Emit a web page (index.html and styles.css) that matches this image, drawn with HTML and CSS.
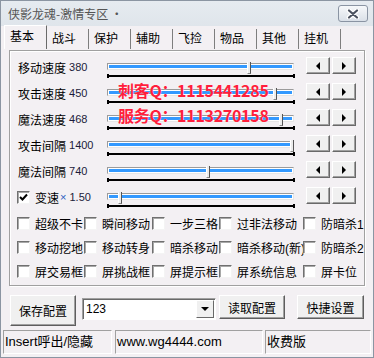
FILE: index.html
```html
<!DOCTYPE html>
<html lang="zh">
<head>
<meta charset="UTF-8">
<title>侠影龙魂-激情专区</title>
<link rel="stylesheet" href="styles.css">
</head>
<body>
<div class="win">
  <div class="titlebar">
    <span class="title">侠影龙魂-激情专区 ·</span>
    <span class="close-btn">
      <svg width="14" height="10" viewBox="0 0 14 10">
        <path d="M3 1.5 L11 8.5 M11 1.5 L3 8.5" stroke="#fff" stroke-width="4.5" stroke-linecap="round"/>
        <path d="M3 1.5 L11 8.5 M11 1.5 L3 8.5" stroke="#4b5260" stroke-width="2.2" stroke-linecap="round"/>
      </svg>
    </span>
  </div>

  <div class="tabs">
    <span class="tab active">基本</span>
    <span class="tab">战斗</span>
    <span class="tab">保护</span>
    <span class="tab">辅助</span>
    <span class="tab">飞捡</span>
    <span class="tab">物品</span>
    <span class="tab">其他</span>
    <span class="tab">挂机</span>
  </div>

  <div class="group">
    <div class="row">
      <div class="lbl">移动速度<span class="num">380</span></div>
      <div class="slider"><div class="track"></div><div class="ticks"></div><div class="thumb" style="left:140px"></div></div>
      <div class="spin"><button class="arr"><i class="tri-l"></i></button><button class="arr"><i class="tri-r"></i></button></div>
    </div>
    <div class="row">
      <div class="lbl">攻击速度<span class="num">450</span></div>
      <div class="slider"><div class="track"></div><div class="ticks"></div><div class="thumb" style="left:166px"></div></div>
      <div class="spin"><button class="arr"><i class="tri-l"></i></button><button class="arr"><i class="tri-r"></i></button></div>
    </div>
    <div class="row">
      <div class="lbl">魔法速度<span class="num">468</span></div>
      <div class="slider"><div class="track"></div><div class="ticks"></div><div class="thumb" style="left:172px"></div></div>
      <div class="spin"><button class="arr"><i class="tri-l"></i></button><button class="arr"><i class="tri-r"></i></button></div>
    </div>
    <div class="row">
      <div class="lbl">攻击间隔<span class="num">1400</span></div>
      <div class="slider"><div class="track"></div><div class="ticks"></div><div class="thumb" style="left:183px"></div></div>
      <div class="spin"><button class="arr"><i class="tri-l"></i></button><button class="arr"><i class="tri-r"></i></button></div>
    </div>
    <div class="row">
      <div class="lbl">魔法间隔<span class="num">740</span></div>
      <div class="slider"><div class="track"></div><div class="ticks"></div><div class="thumb" style="left:99px"></div></div>
      <div class="spin"><button class="arr"><i class="tri-l"></i></button><button class="arr"><i class="tri-r"></i></button></div>
    </div>
    <div class="row">
      <div class="lbl chk-lbl"><span class="cb checked"><svg width="11" height="11" viewBox="0 0 11 11"><path d="M2 5 L4.5 7.5 L9 2.5" fill="none" stroke="#000" stroke-width="2"/></svg></span><span class="cb-text">变速</span><span class="mul">×</span><span class="num">1.50</span></div>
      <div class="slider"><div class="track"></div><div class="ticks"></div><div class="thumb" style="left:11px"></div></div>
      <div class="spin"><button class="arr"><i class="tri-l"></i></button><button class="arr"><i class="tri-r"></i></button></div>
    </div>

    <div class="qq qq1">刺客Q：1115441285</div>
    <div class="qq qq2">服务Q：1113270158</div>

    <div class="opts">
      <label class="opt"><span class="cb"></span>超级不卡</label>
      <label class="opt"><span class="cb"></span>瞬间移动</label>
      <label class="opt"><span class="cb"></span>一步三格</label>
      <label class="opt"><span class="cb"></span>过非法移动</label>
      <label class="opt"><span class="cb"></span>防暗杀1</label>

      <label class="opt"><span class="cb"></span>移动挖地</label>
      <label class="opt"><span class="cb"></span>移动转身</label>
      <label class="opt"><span class="cb"></span>暗杀移动</label>
      <label class="opt"><span class="cb"></span>暗杀移动(新)</label>
      <label class="opt"><span class="cb"></span>防暗杀2</label>

      <label class="opt"><span class="cb"></span>屏交易框</label>
      <label class="opt"><span class="cb"></span>屏挑战框</label>
      <label class="opt"><span class="cb"></span>屏提示框</label>
      <label class="opt"><span class="cb"></span>屏系统信息</label>
      <label class="opt"><span class="cb"></span>屏卡位</label>
    </div>
  </div>

  <div class="actions">
    <button class="btn btn-save">保存配置</button>
    <div class="combo">
      <span class="combo-val">123</span>
      <span class="combo-drop"><i class="tri-d"></i></span>
    </div>
    <button class="btn btn-load">读取配置</button>
    <button class="btn btn-quick">快捷设置</button>
  </div>

  <div class="status">
    <div class="sp sp1">Insert呼出/隐藏</div>
    <div class="sp sp2">www.wg4444.com</div>
    <div class="sp sp3">收费版</div>
  </div>
</div>
</body>
</html>
```

FILE: styles.css
```css
body {
  margin: 0;
  background: #fff;
  font-family: "Liberation Sans", "Noto Sans CJK SC", sans-serif;
  font-size: 12px;
  color: #000;
}

.win {
  width: 374px;
  height: 358px;
  box-sizing: border-box;
  border: 1px solid #8b95a2;
  background: #f3f0f3;
}

.titlebar {
  height: 25px;
  display: flex;
  align-items: center;
  justify-content: space-between;
  background: linear-gradient(#e6ebf0, #dfe5eb);
}

.title {
  margin-left: 7px;
  color: #555;
  font-family: "Noto Sans CJK SC", sans-serif;
  font-size: 12px;
  line-height: 14px;
}

.close-btn {
  width: 30px;
  height: 17px;
  box-sizing: border-box;
  margin-right: 5px;
  border: 1px solid #8a94a3;
  border-radius: 3px;
  background: linear-gradient(#f6f8fa, #dae0e8);
  display: flex;
  align-items: center;
  justify-content: center;
}

.tabs {
  height: 23px;
  display: flex;
  align-items: flex-end;
  padding-left: 3px;
}

.tab {
  width: 42px;
  height: 20px;
  box-sizing: border-box;
  padding-left: 5px;
  line-height: 18px;
  border-right: 1px solid #7e7e7e;
  font-family: "Noto Sans CJK SC", sans-serif;
}

.tab.active {
  width: 43px;
  height: 24px;
  line-height: 20px;
  border-top: 1px solid #fff;
  border-left: 1px solid #fff;
  border-right: 1px solid #6a6a6a;
}

.group {
  position: relative;
  margin: 1px 0 0 8px;
  width: 356px;
  height: 236px;
  box-sizing: border-box;
  padding-top: 3px;
  border: 1px solid #a0a0a0;
  box-shadow: 1px 1px 0 #fff, inset 1px 1px 0 #fff;
}

.row {
  display: flex;
  height: 26px;
}

.lbl {
  width: 97px;
  height: 26px;
  box-sizing: border-box;
  padding-left: 8px;
  display: flex;
  align-items: center;
  white-space: nowrap;
}

.num {
  margin-left: 3px;
  font-size: 11px;
  color: #1b1b3a;
}

.chk-lbl {
  padding-left: 7px;
}

.cb-text {
  margin-left: 5px;
}

.mul {
  color: #2a5cc0;
  font-size: 11px;
  margin-left: 1px;
}

.slider {
  position: relative;
  width: 188px;
}

.track {
  margin-top: 9px;
  width: 187px;
  height: 7px;
  box-sizing: border-box;
  border: 1px solid;
  border-color: #9b9b9b #e6e6e6 #e6e6e6 #9b9b9b;
  background: #3399ff;
  box-shadow: inset 0 0 0 1px #fff;
}

.ticks {
  position: relative;
  margin-top: 5px;
  width: 187px;
  height: 2px;
  background: #000;
}

.ticks::before,
.ticks::after {
  content: "";
  position: absolute;
  top: -1px;
  width: 2px;
  height: 4px;
  background: #000;
}

.ticks::before {
  left: 0;
}

.ticks::after {
  right: -1px;
}

.thumb {
  position: absolute;
  top: 8px;
  width: 4px;
  height: 12px;
  box-sizing: border-box;
  background: #ececec;
  border-left: 1px solid #fff;
  border-right: 1px solid #555;
  border-bottom: 1px solid #888;
}

.spin {
  display: flex;
  gap: 2px;
  margin: 3px 0 0 11px;
  height: 17px;
}

.arr {
  width: 24px;
  height: 17px;
  padding: 0;
  box-sizing: border-box;
  border: 1px solid;
  border-color: #fff #696969 #696969 #fff;
  background: #f0f0f0;
  box-shadow: inset -1px -1px 0 #a0a0a0;
  display: flex;
  align-items: center;
  justify-content: center;
}

.tri-l,
.tri-r,
.tri-d {
  display: block;
  width: 0;
  height: 0;
  border-style: solid;
}

.tri-l {
  border-width: 4px 4px 4px 0;
  border-color: transparent #000 transparent transparent;
}

.tri-r {
  border-width: 4px 0 4px 4px;
  border-color: transparent transparent transparent #000;
}

.tri-d {
  border-width: 4px 4px 0 4px;
  border-color: #000 transparent transparent transparent;
}

.cb {
  width: 13px;
  height: 13px;
  flex: none;
  box-sizing: border-box;
  border: 1px solid;
  border-color: #707070 #f4f4f4 #f4f4f4 #707070;
  background: #fff;
  box-shadow: inset 1px 1px 0 #a8a8a8;
  display: flex;
  align-items: center;
  justify-content: center;
}

.qq {
  position: absolute;
  left: 108px;
  font-family: "Noto Sans CJK SC", sans-serif;
  font-size: 16px;
  font-weight: bold;
  line-height: 16px;
  color: #ff1e3c;
  letter-spacing: -0.3px;
  text-shadow: 0 0 1px #fff;
  white-space: nowrap;
}

.qq1 {
  top: 31px;
}

.qq2 {
  top: 56px;
}

.opts {
  display: grid;
  grid-template-columns: 67px 68px 67px 84px 1fr;
  padding-left: 7px;
  margin-top: 1px;
}

.opt {
  display: flex;
  align-items: center;
  gap: 5px;
  height: 24px;
  white-space: nowrap;
}

.actions {
  display: flex;
  align-items: flex-start;
  margin: 9px 0 0 9px;
  height: 31px;
}

.btn {
  padding: 0;
  box-sizing: border-box;
  border: 1px solid;
  border-color: #fff #5e5e5e #5e5e5e #fff;
  background: #f0f0f0;
  box-shadow: inset -1px -1px 0 #a0a0a0;
  font-family: "Noto Sans CJK SC", sans-serif;
  font-size: 12px;
  color: #000;
}

.btn-save {
  width: 66px;
  height: 31px;
}

.btn-load {
  width: 66px;
  height: 24px;
  margin-left: 3px;
}

.btn-quick {
  width: 67px;
  height: 24px;
  margin-left: 12px;
}

.combo {
  display: flex;
  justify-content: space-between;
  width: 134px;
  height: 22px;
  margin: 3px 0 0 6px;
  box-sizing: border-box;
  border: 1px solid;
  border-color: #a0a0a0 #fff #fff #a0a0a0;
  background: #fff;
  box-shadow: inset 1px 1px 0 #696969;
}

.combo-val {
  padding-left: 3px;
  line-height: 20px;
}

.combo-drop {
  width: 18px;
  height: 18px;
  margin: 1px 1px 0 0;
  box-sizing: border-box;
  border: 1px solid;
  border-color: #fff #696969 #696969 #fff;
  background: #f0f0f0;
  display: flex;
  align-items: center;
  justify-content: center;
}

.status {
  display: flex;
  margin: 4px 0 0 2px;
}

.sp {
  height: 24px;
  box-sizing: border-box;
  padding-left: 1px;
  border: 1px solid;
  border-color: #a0a0a0 #fff #fff #a0a0a0;
  font-size: 13px;
  line-height: 22px;
  white-space: nowrap;
}

.sp1 {
  width: 109px;
}

.sp2 {
  width: 148px;
  margin-left: 3px;
}

.sp3 {
  width: 106px;
  margin-left: 2px;
}
```
